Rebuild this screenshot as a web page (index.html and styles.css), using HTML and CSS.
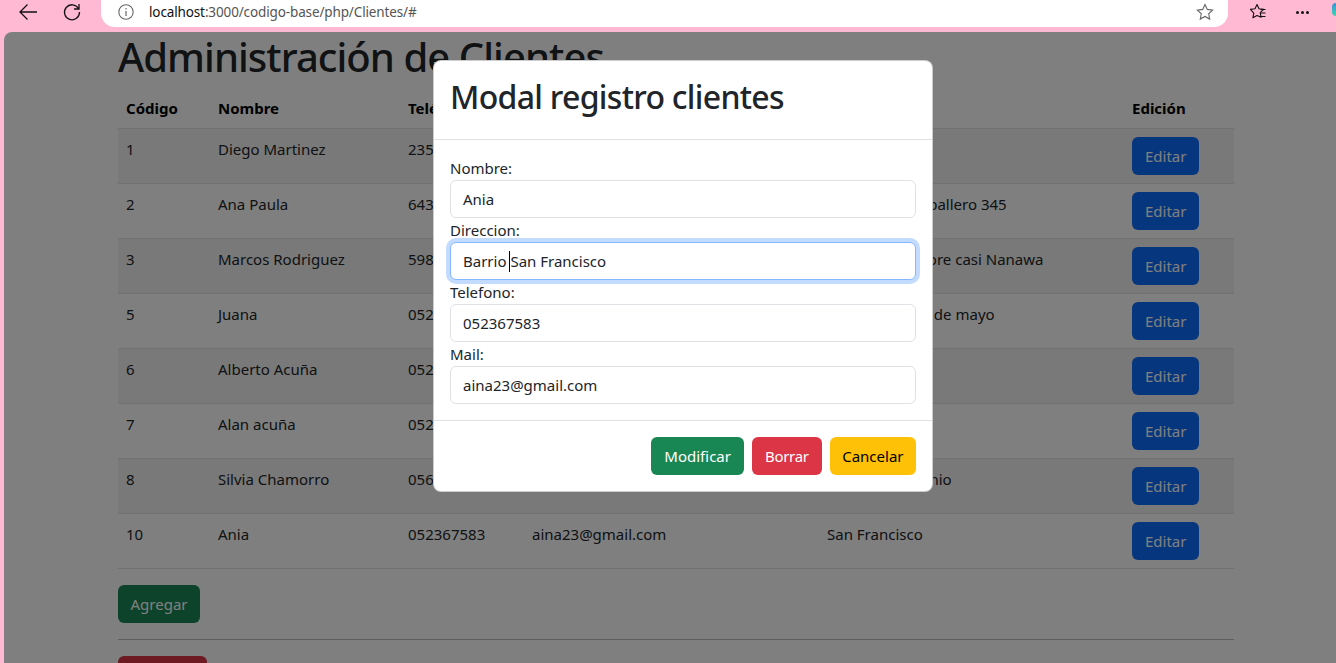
FILE: index.html
```html
<!DOCTYPE html>
<html lang="es">

<head>
    <meta charset="UTF-8">
    <title>Clientes</title>
    <link rel="stylesheet" href="styles.css">
</head>

<body>
    <!-- Browser toolbar -->
    <header class="toolbar">
        <button class="tool-btn" type="button" aria-label="Back">
            <svg width="20" height="20" viewBox="0 0 20 20"><path d="M19 10H2M9.500 2.500 2 10l7.500 7.500" fill="none" stroke="#111" stroke-width="1.300"/></svg>
        </button>
        <button class="tool-btn tool-btn-last" type="button" aria-label="Reload">
            <svg width="20" height="20" viewBox="0 0 20 20"><path d="M16.500 6.500A7.500 7.500 0 1 0 17.500 10M17 2v5h-5" fill="none" stroke="#111" stroke-width="1.300"/></svg>
        </button>
        <div class="address">
            <svg class="info-icon" width="18" height="18" viewBox="0 0 18 18"><circle cx="9" cy="9" r="7.200" fill="none" stroke="#666" stroke-width="1.100"/><path d="M9 8v5M9 5v1.400" stroke="#666" stroke-width="1.200"/></svg>
            <span class="url"><b>localhost</b>:3000/codigo-base/php/Clientes/#</span>
            <svg class="star-icon" width="18" height="18" viewBox="0 0 18 18"><path d="M9 1.500l2.300 4.900 5.300.7-3.900 3.700 1 5.300L9 13.500l-4.700 2.600 1-5.300L1.400 7.100l5.300-.7z" fill="none" stroke="#666" stroke-width="1.100"/></svg>
        </div>
        <svg class="fav-icon" width="18" height="18" viewBox="0 0 18 18"><path d="M8 1.500l2 4.300 4.600.6-3.400 3.200.9 4.700L8 12.500l-4.100 2.300.9-4.700L1.400 6.400 6 5.800z" fill="none" stroke="#111" stroke-width="1.100" stroke-linejoin="round"/><path d="M11.500 6.500h5M12 10h4.500M10.500 13.500h6" stroke="#111" stroke-width="1.100"/></svg>
        <div class="more-dots"><i></i><i></i><i></i></div>
        <div class="edge-logo"></div>
    </header>

    <main class="viewport">
        <div class="container">
            <h1>Administración de Clientes</h1>
            <table class="client-table">
                <thead>
                    <tr><th>Código</th><th>Nombre</th><th>Teléfono</th><th>Mail</th><th>Dirección</th><th>Edición</th></tr>
                </thead>
                <tbody>
                    <tr><td>1</td><td>Diego Martinez</td><td>235478965</td><td>diego@gmail.com</td><td>Asuncion</td><td><a class="btn btn-blue">Editar</a></td></tr>
                    <tr><td>2</td><td>Ana Paula</td><td>643256789</td><td>anapaula@gmail.com</td><td>Bernardino Caballero 345</td><td><a class="btn btn-blue">Editar</a></td></tr>
                    <tr><td>3</td><td>Marcos Rodriguez</td><td>598745632</td><td>marcos@gmail.com</td><td>Avenida Mangore casi Nanawa</td><td><a class="btn btn-blue">Editar</a></td></tr>
                    <tr><td>5</td><td>Juana</td><td>052367412</td><td>juana@gmail.com</td><td>Avenida del 25 de mayo</td><td><a class="btn btn-blue">Editar</a></td></tr>
                    <tr><td>6</td><td>Alberto Acuña</td><td>052369874</td><td>alberto@gmail.com</td><td>Luque</td><td><a class="btn btn-blue">Editar</a></td></tr>
                    <tr><td>7</td><td>Alan acuña</td><td>052314785</td><td>alan@gmail.com</td><td>Centro</td><td><a class="btn btn-blue">Editar</a></td></tr>
                    <tr><td>8</td><td>Silvia Chamorro</td><td>056321478</td><td>silvia@gmail.com</td><td>Zona San Antonio</td><td><a class="btn btn-blue">Editar</a></td></tr>
                    <tr><td>10</td><td>Ania</td><td>052367583</td><td>aina23@gmail.com</td><td>San Francisco</td><td><a class="btn btn-blue">Editar</a></td></tr>
                </tbody>
            </table>
            <a class="btn btn-green">Agregar</a>
            <hr>
            <a class="btn btn-red">Reportes</a>
        </div>

        <div class="backdrop"></div>

        <!-- Modal -->
        <div class="modal">
            <div class="modal-header">
                <h2>Modal registro clientes</h2>
            </div>
            <form class="modal-body">
                <label>Nombre:</label>
                <div class="field">Ania</div>
                <label>Direccion:</label>
                <div class="field field-focus">Barrio <span class="caret"></span>San Francisco</div>
                <label>Telefono:</label>
                <div class="field">052367583</div>
                <label>Mail:</label>
                <div class="field">aina23@gmail.com</div>
            </form>
            <div class="modal-footer">
                <a class="btn btn-success">Modificar</a>
                <a class="btn btn-danger">Borrar</a>
                <a class="btn btn-warning">Cancelar</a>
            </div>
        </div>
    </main>
</body>

</html>
```

FILE: styles.css
```css
* {
    box-sizing: border-box;
}

html,
body {
    height: 100%;
}

body {
    margin: 0;
    overflow: hidden;
    background-color: #ffb9d2;
    font-family: 'Noto Sans', sans-serif;
    font-size: 16px;
    line-height: 24px;
    color: #212529;
}

.toolbar {
    height: 32px;
    display: flex;
    align-items: flex-start;
    padding-left: 18px;
}

.tool-btn {
    width: 20px;
    height: 20px;
    padding: 0;
    margin: 2px 24px 0 0;
    border: 0;
    background: none;
}

.tool-btn-last {
    margin-right: 19px;
}

.address {
    flex: none;
    width: 1127px;
    height: 27px;
    margin-right: 21px;
    display: flex;
    align-items: center;
    padding: 0 14px 3px 16px;
    background-color: #fff;
    border-radius: 0 0 14px 14px;
}

.url {
    margin-left: 14px;
    font-size: 13.5px;
    letter-spacing: -0.13px;
    color: #555;
}

.url b {
    font-weight: 400;
    color: #111;
}

.star-icon {
    margin-left: auto;
}

.fav-icon {
    flex: none;
    margin-top: 3px;
}

.more-dots {
    flex: none;
    display: flex;
    gap: 2px;
    margin: 11px 0 0 29px;
}

.more-dots i {
    width: 3px;
    height: 3px;
    background-color: #111;
    border-radius: 50%;
}

.edge-logo {
    flex: none;
    width: 4px;
    height: 13px;
    margin: 3px 0 0 23px;
    background: linear-gradient(#3a8fd8, #3ad8b0);
    border-radius: 4px 0 0 4px;
}

.viewport {
    position: relative;
    height: calc(100% - 32px);
    margin-left: 4px;
    background-color: #fff;
    border-radius: 8px 0 0 0;
    overflow: hidden;
}

.container {
    width: 1116px;
    margin-left: 114px;
}

h1 {
    margin: 0 0 7px;
    padding-top: 1px;
    font-size: 40px;
    font-weight: 500;
    line-height: 48px;
    letter-spacing: -0.95px;
}

.client-table {
    width: 100%;
    table-layout: fixed;
    border-collapse: collapse;
    margin-bottom: 16px;
    font-size: 15px;
}

.client-table th:nth-child(1) { width: 92px; }
.client-table th:nth-child(2) { width: 190px; }
.client-table th:nth-child(3) { width: 124px; }
.client-table th:nth-child(4) { width: 295px; }
.client-table th:nth-child(5) { width: 305px; }

.client-table th,
.client-table td {
    padding: 8px;
    text-align: left;
    vertical-align: top;
    border-bottom: 1px solid #dee2e6;
    white-space: nowrap;
}

.client-table th {
    font-weight: 700;
    color: #000;
}

.client-table tbody tr {
    height: 55px;
}

.client-table tbody tr:nth-child(odd) td {
    background-color: #f2f2f2;
}

.btn {
    display: inline-block;
    height: 38px;
    padding: 7px 13px;
    border-radius: 6px;
    font-size: 15px;
    line-height: 24px;
    color: #fff;
}

.btn-blue { background-color: #0d6efd; }
.btn-green { background-color: #198754; padding: 7px 12.5px; }
.btn-red { background-color: #dc3545; }
.btn-success { background-color: #198754; }
.btn-danger { background-color: #dc3545; letter-spacing: -0.3px; }
.btn-warning { background-color: #ffc107; color: #000; padding: 7px 12.5px; }

hr {
    margin: 16px 0;
    border: 0;
    border-top: 1px solid #bbb;
}

.backdrop {
    position: absolute;
    inset: 0;
    background-color: rgba(0, 0, 0, 0.5);
}

.modal {
    position: absolute;
    top: 28px;
    left: 429px;
    width: 500px;
    background-color: #fff;
    border-radius: 8px;
    border: 1px solid rgba(0, 0, 0, 0.2);
}

.modal-header {
    height: 79px;
    padding: 16px;
    border-bottom: 1px solid #dee2e6;
}

h2 {
    margin: 0;
    font-size: 32px;
    font-weight: 500;
    line-height: 40px;
    letter-spacing: -0.7px;
}

.modal-body {
    padding: 16px;
    font-size: 15px;
}

.modal-body label {
    display: block;
    height: 24px;
    line-height: 24px;
}

.field {
    height: 38px;
    padding: 6px 12px;
    background-color: #fff;
    border: 1px solid #dee2e6;
    border-radius: 6px;
}

.field-focus {
    border-color: #86b7fe;
    box-shadow: 0 0 0 4px #c2dbfe;
}

.caret {
    display: inline-block;
    width: 1px;
    height: 21px;
    margin-left: -1px;
    vertical-align: -5px;
    background-color: #000;
}

.modal-footer {
    display: flex;
    justify-content: flex-end;
    gap: 8px;
    padding: 16px;
    border-top: 1px solid #dee2e6;
}
```
